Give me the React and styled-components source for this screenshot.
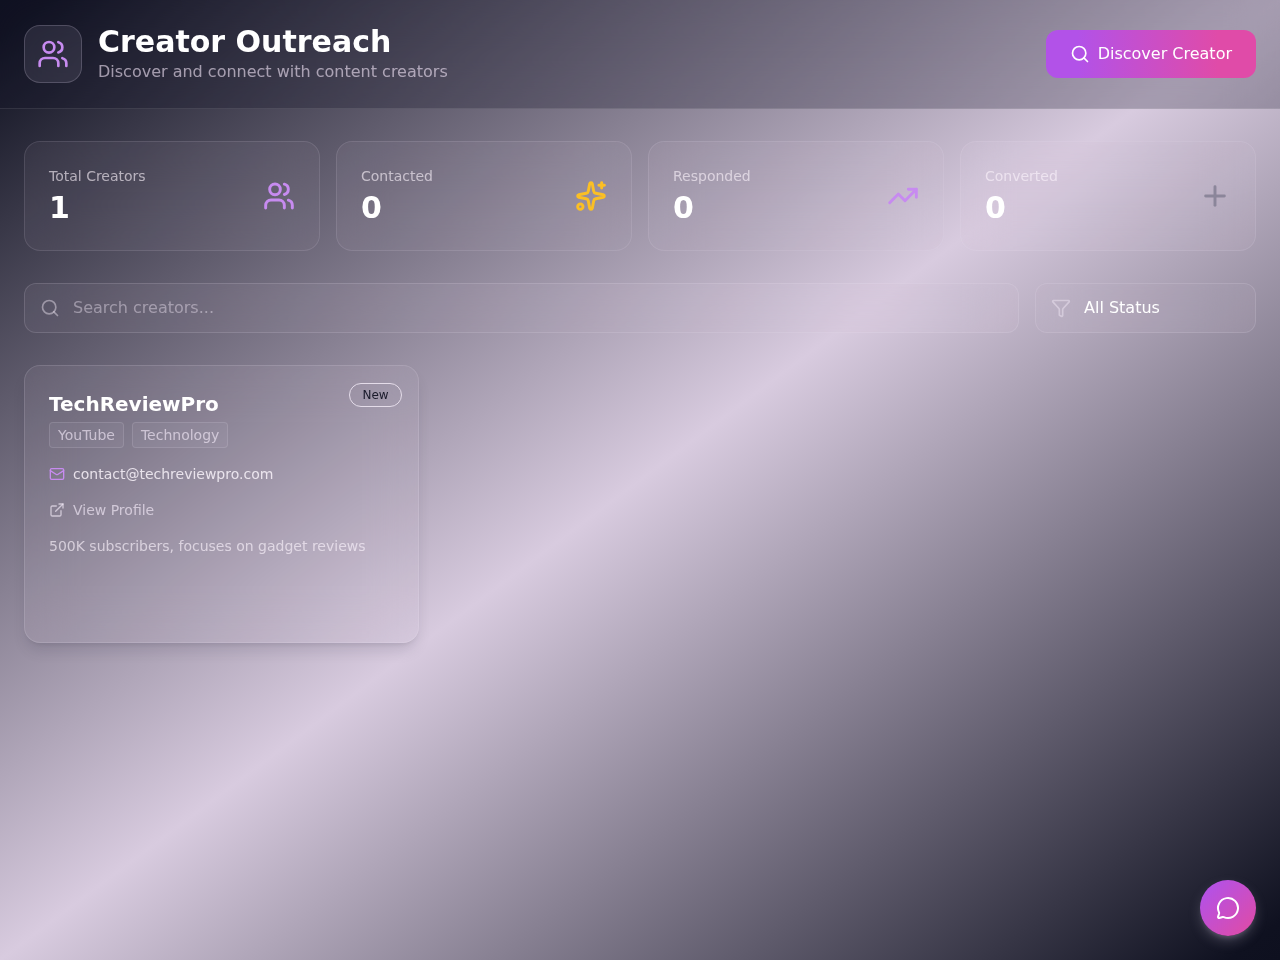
import { useState } from "react";
import styled, { createGlobalStyle } from "styled-components";
import {
  ExternalLink,
  Funnel,
  Mail,
  MessageCircle,
  Plus,
  Search,
  Sparkles,
  TrendingUp,
  Users,
} from "lucide-react";

const stats = [
  { label: "Total Creators", value: 1, icon: Users, color: "#c78bf0" },
  { label: "Contacted", value: 0, icon: Sparkles, color: "#fbbf24" },
  { label: "Responded", value: 0, icon: TrendingUp, color: "#c78bf0" },
  { label: "Converted", value: 0, icon: Plus, color: "#8b869a" },
];

const creators = [
  {
    id: 1,
    name: "TechReviewPro",
    status: "New",
    tags: ["YouTube", "Technology"],
    email: "contact@techreviewpro.com",
    notes: "500K subscribers, focuses on gadget reviews",
  },
];

export default function App() {
  const [query, setQuery] = useState("");

  const visible = creators.filter((creator) =>
    creator.name.toLowerCase().includes(query.toLowerCase())
  );

  return (
    <>
      <GlobalStyle />
      <Page>
        <Header>
          <Brand>
            <Logo>
              <Users size={32} color="#c78bf0" />
            </Logo>
            <div>
              <Title>Creator Outreach</Title>
              <Subtitle>Discover and connect with content creators</Subtitle>
            </div>
          </Brand>
          <DiscoverButton>
            <Search size={20} />
            Discover Creator
          </DiscoverButton>
        </Header>

        <Main>
          <Stats>
            {stats.map(({ label, value, icon: Icon, color }) => (
              <StatCard key={label}>
                <div>
                  <StatLabel>{label}</StatLabel>
                  <StatValue>{value}</StatValue>
                </div>
                <Icon size={32} strokeWidth={2.2} color={color} />
              </StatCard>
            ))}
          </Stats>

          <Filters>
            <SearchField>
              <Search size={20} />
              <SearchInput
                value={query}
                onChange={(e) => setQuery(e.target.value)}
                placeholder="Search creators..."
              />
            </SearchField>
            <StatusField>
              <Funnel size={20} />
              <span>All Status</span>
            </StatusField>
          </Filters>

          <Creators>
            {visible.map((creator) => (
              <CreatorCard key={creator.id}>
                <Badge>{creator.status}</Badge>
                <Name>{creator.name}</Name>
                <Tags>
                  {creator.tags.map((tag) => (
                    <Tag key={tag}>{tag}</Tag>
                  ))}
                </Tags>
                <Email>
                  <Mail size={16} color="#c78bf0" />
                  {creator.email}
                </Email>
                <Profile>
                  <ExternalLink size={16} />
                  View Profile
                </Profile>
                <Notes>{creator.notes}</Notes>
              </CreatorCard>
            ))}
          </Creators>
        </Main>

        <ChatButton aria-label="Chat">
          <MessageCircle size={24} />
        </ChatButton>
      </Page>
    </>
  );
}

const GlobalStyle = createGlobalStyle`
  * {
    box-sizing: border-box;
    margin: 0;
    padding: 0;
  }
  body, button, input {
    font-family: "DejaVu Sans", sans-serif;
    font-size: 16px;
    line-height: 24px;
  }
  svg {
    flex-shrink: 0;
  }
`;

const Page = styled.div`
  min-height: 100vh;
  color: white;
  background: linear-gradient(
    to bottom right,
    #0e101f,
    #0f1120 2%,
    #d8cbdf 50%,
    #0f1120 98%,
    #0e101f
  );
`;

const Header = styled.header`
  display: flex;
  justify-content: space-between;
  align-items: center;
  padding: 24px;
  background-color: rgba(18, 20, 38, 0.25);
  border-bottom: 1px solid rgba(255, 255, 255, 0.1);
  backdrop-filter: blur(24px);
`;

const Brand = styled.div`
  display: flex;
  align-items: center;
  gap: 16px;
`;

const Logo = styled.div`
  display: flex;
  padding: 12px;
  border: 1px solid rgba(230, 220, 240, 0.2);
  border-radius: 16px;
  background-color: rgba(230, 220, 250, 0.1);
`;

const Title = styled.h1`
  font-size: 30px;
  line-height: 36px;
  font-weight: 700;
`;

const Subtitle = styled.p`
  color: rgba(240, 228, 246, 0.62);
`;

const DiscoverButton = styled.button`
  display: flex;
  align-items: center;
  gap: 8px;
  height: 48px;
  padding: 0 24px;
  border: none;
  border-radius: 12px;
  color: white;
  background: linear-gradient(to right, #b252e8 15%, #e04ba8 82%);
  cursor: pointer;
`;

const Main = styled.main`
  display: flex;
  flex-direction: column;
  gap: 32px;
  padding: 32px 24px;
`;

const Stats = styled.section`
  display: grid;
  grid-template-columns: repeat(4, 1fr);
  gap: 16px;
`;

const StatCard = styled.div`
  display: flex;
  justify-content: space-between;
  align-items: center;
  padding: 24px;
  border: 1px solid rgba(240, 232, 248, 0.12);
  border-radius: 16px;
  background-color: rgba(230, 220, 245, 0.05);
  backdrop-filter: blur(24px);
`;

const StatLabel = styled.p`
  margin-bottom: 4px;
  font-size: 14px;
  line-height: 20px;
  color: rgba(252, 244, 252, 0.62);
`;

const StatValue = styled.p`
  font-size: 30px;
  line-height: 36px;
  font-weight: 700;
`;

const Filters = styled.section`
  display: flex;
  gap: 16px;
`;

const Field = styled.div`
  display: flex;
  align-items: center;
  height: 50px;
  padding: 0 15px;
  border: 1px solid rgba(240, 232, 248, 0.15);
  border-radius: 12px;
  background-color: rgba(230, 220, 245, 0.05);
  backdrop-filter: blur(24px);

  svg {
    color: rgba(246, 236, 250, 0.44);
  }
`;

const SearchField = styled(Field)`
  flex: 1;
  gap: 13px;
`;

const SearchInput = styled.input`
  flex: 1;
  border: none;
  outline: none;
  color: white;
  background: transparent;

  &::placeholder {
    color: rgba(246, 236, 250, 0.42);
  }
`;

const StatusField = styled(Field)`
  width: 221px;
  gap: 13px;
`;

const Creators = styled.section`
  display: grid;
  grid-template-columns: repeat(3, 1fr);
  gap: 24px;
`;

const CreatorCard = styled.article`
  position: relative;
  height: 278px;
  padding: 24px;
  border: 1px solid rgba(240, 232, 248, 0.14);
  border-radius: 16px;
  background-color: rgba(230, 220, 245, 0.06);
  box-shadow: 0 10px 15px -3px rgba(20, 16, 40, 0.12),
    0 4px 6px -4px rgba(20, 16, 40, 0.12);
  backdrop-filter: blur(24px);
  font-size: 14px;
  line-height: 20px;
`;

const Badge = styled.span`
  position: absolute;
  top: 17px;
  right: 16px;
  padding: 3px 12px;
  border: 1px solid #e4dce9;
  border-radius: 999px;
  font-size: 12px;
  line-height: 16px;
  color: #1a1b2b;
`;

const Name = styled.h3`
  margin-bottom: 4px;
  font-size: 20px;
  line-height: 28px;
  font-weight: 700;
`;

const Tags = styled.div`
  display: flex;
  gap: 8px;
  margin-bottom: 16px;
`;

const Tag = styled.span`
  padding: 2px 8px;
  border: 1px solid rgba(240, 232, 248, 0.14);
  border-radius: 4px;
  color: rgba(246, 236, 250, 0.63);
  background-color: rgba(240, 232, 248, 0.05);
`;

const InfoRow = styled.div`
  display: flex;
  align-items: center;
  gap: 8px;
  margin-bottom: 16px;
`;

const Email = styled(InfoRow)`
  color: rgba(250, 244, 252, 0.84);
`;

const Profile = styled(InfoRow)`
  color: rgba(246, 236, 250, 0.65);
`;

const Notes = styled.p`
  color: rgba(250, 242, 252, 0.65);
`;

const ChatButton = styled.button`
  position: fixed;
  right: 24px;
  bottom: 24px;
  display: flex;
  justify-content: center;
  align-items: center;
  width: 56px;
  height: 56px;
  border: none;
  border-radius: 50%;
  color: white;
  background: linear-gradient(to bottom right, #ad52f0, #e24ba2);
  box-shadow: 0 6px 14px -2px rgba(225, 215, 240, 0.26),
    0 4px 6px -4px rgba(225, 215, 240, 0.3);
  cursor: pointer;
`;
